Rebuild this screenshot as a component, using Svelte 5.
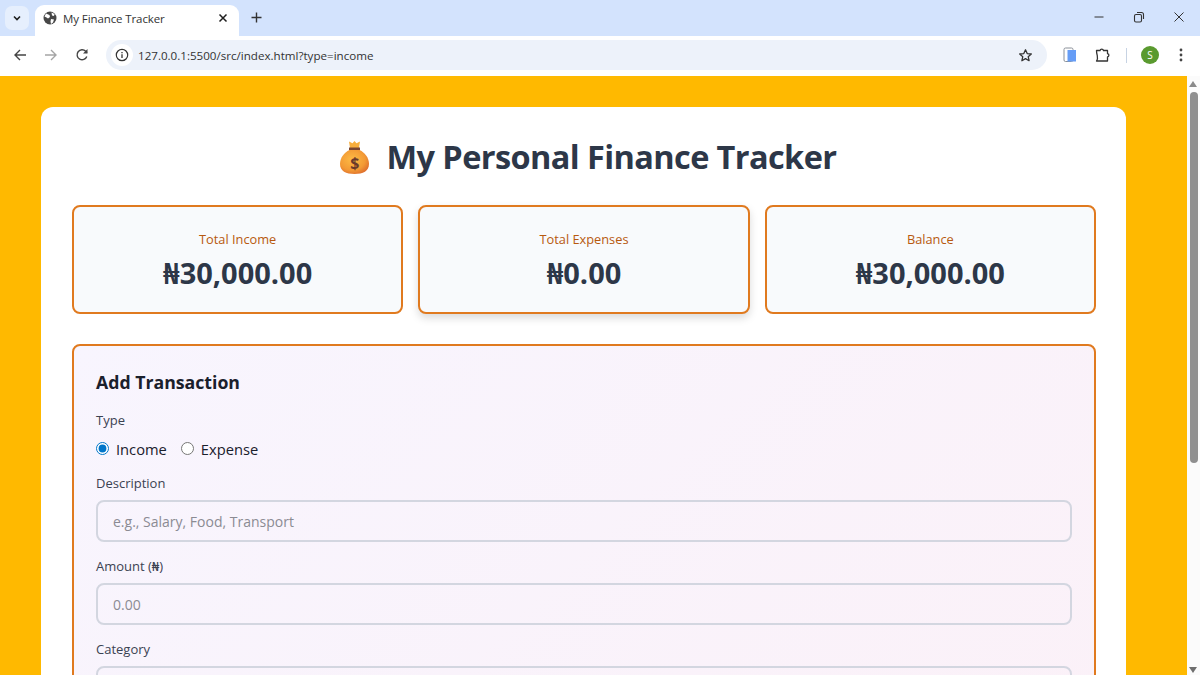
<script>
  let type = $state('income');
  const stats = [
    { label: 'Total Income', value: '₦30,000.00' },
    { label: 'Total Expenses', value: '₦0.00', raised: true },
    { label: 'Balance', value: '₦30,000.00' }
  ];
</script>

<div class="browser">
  <div class="tabstrip">
    <button class="tab-search" aria-label="Search tabs">
      <svg width="10" height="10" viewBox="0 0 10 10"><path d="M2 3.5 5 6.5 8 3.5" fill="none" stroke="#1f1f1f" stroke-width="1.6"/></svg>
    </button>
    <div class="tab">
      <svg class="globe" width="14" height="14" viewBox="0 0 14 14">
        <circle cx="7" cy="7" r="6.5" fill="#474747"/>
        <path d="M3 2.5 6.5 4 7 6 5 7.5 3.5 6.5 1.5 5.5ZM8 8 11 8.5 10 11.5 8 13 7.5 10.5ZM8.5 1.5 11.5 3 11 5 9 4.5Z" fill="#fff"/>
      </svg>
      <span class="tab-title">My Finance Tracker</span>
      <svg class="tab-close" width="10" height="10" viewBox="0 0 10 10"><path d="M1.5 1.5 8.5 8.5M8.5 1.5 1.5 8.5" stroke="#1f1f1f" stroke-width="1.5"/></svg>
    </div>
    <svg class="new-tab" width="11" height="11" viewBox="0 0 11 11"><path d="M5.5.5v10M.5 5.5h10" stroke="#333" stroke-width="1.4"/></svg>
    <div class="win-controls">
      <svg width="12" height="12" viewBox="0 0 12 12"><path d="M1.5 6h9" stroke="#333" stroke-width="1"/></svg>
      <svg width="12" height="12" viewBox="0 0 12 12"><rect x="1.5" y="3.5" width="7" height="7.5" rx="1.5" fill="none" stroke="#333" stroke-width="1.1"/><path d="M4 1.5h4.5a2 2 0 0 1 2 2V8" fill="none" stroke="#333" stroke-width="1.1"/></svg>
      <svg width="12" height="12" viewBox="0 0 12 12"><path d="M1.5 1.5 10.500 10.500M10.500 1.500 1.500 10.500" stroke="#333" stroke-width="1"/></svg>
    </div>
  </div>

  <div class="toolbar">
    <div class="nav">
      <svg width="14" height="14" viewBox="0 0 14 14"><path d="M13 7H2M7 2 2 7l5 5" fill="none" stroke="#444" stroke-width="1.4"/></svg>
      <svg width="14" height="14" viewBox="0 0 14 14"><path d="M1 7h11M7 2l5 5-5 5" fill="none" stroke="#a5a5a5" stroke-width="1.4"/></svg>
      <svg width="14" height="14" viewBox="0 0 14 14"><path d="M11.800 8.500A5 5 0 1 1 10.700 3.300L12 4.700" fill="none" stroke="#444" stroke-width="1.400"/><path d="M12.500 1v4.500H8z" fill="#444"/></svg>
    </div>
    <div class="omnibox">
      <span class="site-info">
        <svg width="14" height="14" viewBox="0 0 14 14"><circle cx="7" cy="7" r="5.700" fill="none" stroke="#333" stroke-width="1.200"/><path d="M7 6.200v3.800M7 4v1.200" stroke="#333" stroke-width="1.300"/></svg>
      </span>
      <span class="url">127.0.0.1:5500/src/index.html?type=income</span>
      <svg class="star" width="15" height="15" viewBox="0 0 15 15"><path d="M7.500 1.800 9.200 5.600l4.100.4-3.100 2.700.9 4-3.600-2.100-3.600 2.100.9-4L1.700 6l4.100-.4z" fill="none" stroke="#333" stroke-width="1.300" stroke-linejoin="round"/></svg>
    </div>
    <div class="tools">
      <svg width="14" height="16" viewBox="0 0 14 16"><rect x="1" y="1" width="9" height="13.500" rx="1.500" fill="#fff" stroke="#8a9099" stroke-width="1"/><rect x="4.500" y="3" width="8.500" height="11.500" fill="#669df6"/></svg>
      <svg class="puzzle" width="16" height="16" viewBox="0 0 16 16"><path d="M1.500 3.500H5a1.800 1.800 0 0 1 3.500 0H12.500V6.500a1.800 1.800 0 0 1 0 3.500V14H1.500c1.200-1.800 1.200-3.500.8-5.200C1.900 7 1.500 5.500 1.500 3.500Z" fill="none" stroke="#333" stroke-width="1.300" stroke-linejoin="round"/></svg>
      <span class="divider"></span>
      <span class="avatar">S</span>
      <svg class="dots" width="4" height="14" viewBox="0 0 4 14"><circle cx="2" cy="2" r="1.400" fill="#444"/><circle cx="2" cy="7" r="1.400" fill="#444"/><circle cx="2" cy="12" r="1.400" fill="#444"/></svg>
    </div>
  </div>

  <div class="viewport">
    <main class="page">
      <div class="container">
        <h1>
          <svg class="bag" width="33" height="35" viewBox="0 0 33 35" role="img" aria-label="money bag">
            <defs>
              <radialGradient id="bagfill" cx="0.42" cy="0.4" r="0.68">
                <stop offset="0" stop-color="#fdbb45"/>
                <stop offset="0.65" stop-color="#f39a35"/>
                <stop offset="1" stop-color="#dc6a2c"/>
              </radialGradient>
            </defs>
            <path d="M11 1.500 14.500 3.200 16.500 1 18.500 3.200 22 1.500 21 8h-9z" fill="#f7ae3c"/>
            <path d="M11 7.500h11v3H11z" fill="#7a4630"/>
            <path d="M11.500 10C6 12.500 2 18 2 24c0 7 6 10 14.500 10S31 31 31 24c0-6-4-11.500-9.500-14z" fill="url(#bagfill)"/>
            <text x="16.500" y="28.500" text-anchor="middle" class="bag-sign">$</text>
          </svg>
          <span>My Personal Finance Tracker</span>
        </h1>

        <section class="stats">
          {#each stats as s}
            <div class="stat" class:raised={s.raised}>
              <h3>{s.label}</h3>
              <p>{s.value}</p>
            </div>
          {/each}
        </section>

        <section class="form-card">
          <h2>Add Transaction</h2>
          <div class="field type-field">
            <span class="label">Type</span>
            <div class="radios">
              <label class="radio"><input type="radio" bind:group={type} value="income" /> Income</label>
              <label class="radio"><input type="radio" bind:group={type} value="expense" /> Expense</label>
            </div>
          </div>
          <div class="field">
            <label class="label" for="desc">Description</label>
            <input id="desc" class="text" type="text" placeholder="e.g., Salary, Food, Transport" />
          </div>
          <div class="field">
            <label class="label" for="amount">Amount (₦)</label>
            <input id="amount" class="text" type="text" placeholder="0.00" />
          </div>
          <div class="field">
            <label class="label" for="cat">Category</label>
            <input id="cat" class="text" type="text" />
          </div>
        </section>
      </div>
    </main>

    <div class="scrollbar">
      <span class="arrow up"></span>
      <span class="thumb"></span>
      <span class="arrow down"></span>
    </div>
  </div>
</div>

<style>
  :global(body) {
    margin: 0;
    overflow: hidden;
  }

  .browser {
    display: flex;
    flex-direction: column;
    height: 675px;
    font-family: "Open Sans", "Noto Sans", sans-serif;
    overflow: hidden;
  }

  /* ----- browser chrome ----- */
  .tabstrip {
    display: flex;
    align-items: flex-end;
    height: 36px;
    background: #d3e3fd;
    padding-left: 5px;
    flex: none;
  }

  .tab-search {
    all: unset;
    display: flex;
    align-items: center;
    justify-content: center;
    width: 24px;
    height: 24px;
    margin: 0 6px 6px 0;
    border-radius: 7px;
    background: #e6effd;
  }

  .tab {
    display: flex;
    align-items: center;
    width: 204px;
    height: 31px;
    box-sizing: border-box;
    padding: 0 11px 5px 8px;
    background: #fff;
    border-radius: 9px 9px 0 0;
  }

  .tab-title {
    margin-left: 6px;
    font: 11.5px "Open Sans", sans-serif;
    color: #333;
    flex: 1;
    letter-spacing: -0.1px;
  }

  .new-tab {
    margin: 0 0 13px 12px;
  }

  .win-controls {
    display: flex;
    gap: 28px;
    margin-left: auto;
    padding: 0 15px 13px 0;
  }

  .toolbar {
    display: flex;
    align-items: center;
    height: 40px;
    box-sizing: border-box;
    background: #fff;
    padding: 0 11px 2px 13px;
    flex: none;
  }

  .nav {
    display: flex;
    gap: 17px;
    margin-right: 17px;
  }

  .omnibox {
    display: flex;
    align-items: center;
    width: 941px;
    height: 30px;
    box-sizing: border-box;
    padding: 0 14px 0 5px;
    background: #edf2fa;
    border-radius: 15px;
  }

  .site-info {
    display: flex;
    align-items: center;
    justify-content: center;
    width: 22px;
    height: 22px;
    border-radius: 50%;
    background: #fff;
  }

  .url {
    margin-left: 5px;
    font: 11.6px "Open Sans", sans-serif;
    color: #333;
    flex: 1;
  }

  .tools {
    display: flex;
    align-items: center;
    margin-left: 16px;
    flex: 1;
  }

  .puzzle {
    margin-left: 18px;
  }

  .divider {
    width: 1px;
    height: 15px;
    background: #c7d3e3;
    margin: 0 14px 0 15px;
  }

  .avatar {
    display: flex;
    align-items: center;
    justify-content: center;
    width: 18px;
    height: 18px;
    border-radius: 50%;
    background: #5a9a2f;
    color: #fff;
    font: 10px "Open Sans", sans-serif;
  }

  .dots {
    margin-left: auto;
    margin-right: 6px;
  }

  .viewport {
    display: flex;
    flex: 1;
    min-height: 0;
  }

  /* ----- page ----- */
  .page {
    flex: 1;
    background: #ffb900;
    padding: 31px 61px 0 41px;
    overflow: hidden;
  }

  .container {
    background: #fff;
    border-radius: 12px;
    padding: 30px 30px 0 31px;
    min-height: 700px;
    box-sizing: border-box;
  }

  h1 {
    display: flex;
    align-items: center;
    justify-content: center;
    gap: 16px;
    margin: 0 0 27px;
    padding-left: 6px;
    height: 40px;
    padding-bottom: 1px;
    font-size: 32.5px;
    font-weight: 700;
    color: #2d3748;
    letter-spacing: -0.6px;
    line-height: 40px;
  }

  .bag-sign {
    font: 700 16px "Open Sans", sans-serif;
    fill: #6b3a2a;
  }

  .stats {
    display: grid;
    grid-template-columns: repeat(3, 1fr);
    gap: 15px;
    margin-bottom: 30px;
  }

  .stat {
    height: 109px;
    box-sizing: border-box;
    padding-top: 24px;
    background: #f8fafc;
    border: 2px solid #e07a1f;
    border-radius: 8px;
    text-align: center;
  }

  .stat.raised {
    box-shadow: 0 4px 8px rgba(0, 0, 0, 0.15);
  }

  .stat h3 {
    margin: 0 0 6px;
    font-size: 12.800px;
    font-weight: 500;
    line-height: 17px;
    color: #b7590f;
  }

  .stat p {
    margin: 0;
    font-size: 29px;
    font-weight: 700;
    line-height: 38px;
    color: #2d3748;
  }

  .form-card {
    background: linear-gradient(135deg, #f8f5fe, #fbf1f8);
    border: 2px solid #e07a1f;
    border-radius: 8px;
    padding: 23px 22px 0;
    height: 400px;
    box-sizing: border-box;
  }

  h2 {
    margin: 0 0 15px;
    font-size: 17.700px;
    font-weight: 700;
    line-height: 27px;
    color: #1a202c;
  }

  .field {
    display: flex;
    flex-direction: column;
    align-items: stretch;
    margin-bottom: 15px;
  }

  .label {
    font-size: 13px;
    font-weight: 500;
    line-height: 18px;
    color: #3b4252;
    margin-bottom: 8px;
  }

  .type-field .label {
    margin-bottom: 9px;
  }

  .radios {
    display: flex;
    gap: 14px;
    height: 21px;
    align-items: center;
  }

  .radio {
    display: flex;
    align-items: center;
    gap: 7px;
    font-size: 14.700px;
    font-weight: 500;
    color: #1a202c;
  }

  .radio input {
    width: 13px;
    height: 13px;
    margin: 0;
    accent-color: #0075c9;
  }

  .text {
    height: 42px;
    box-sizing: border-box;
    padding: 0 15px;
    border: 2px solid #d3d6e0;
    border-radius: 8px;
    background: transparent;
    font: 14px "Open Sans", sans-serif;
  }

  .text::placeholder {
    color: #8b8b93;
  }

  /* ----- scrollbar ----- */
  .scrollbar {
    position: relative;
    width: 13px;
    background: #fbfbfb;
    flex: none;
  }

  .arrow {
    position: absolute;
    left: 2px;
    width: 0;
    height: 0;
    border-left: 4px solid transparent;
    border-right: 4px solid transparent;
  }

  .arrow.up {
    top: 5px;
    border-bottom: 6px solid #8a8a8a;
  }

  .arrow.down {
    bottom: 2px;
    border-top: 6px solid #6e6e6e;
  }

  .thumb {
    position: absolute;
    top: 16px;
    left: 2.500px;
    width: 8px;
    height: 371px;
    border-radius: 4px;
    background: #8f8f8f;
  }
</style>
